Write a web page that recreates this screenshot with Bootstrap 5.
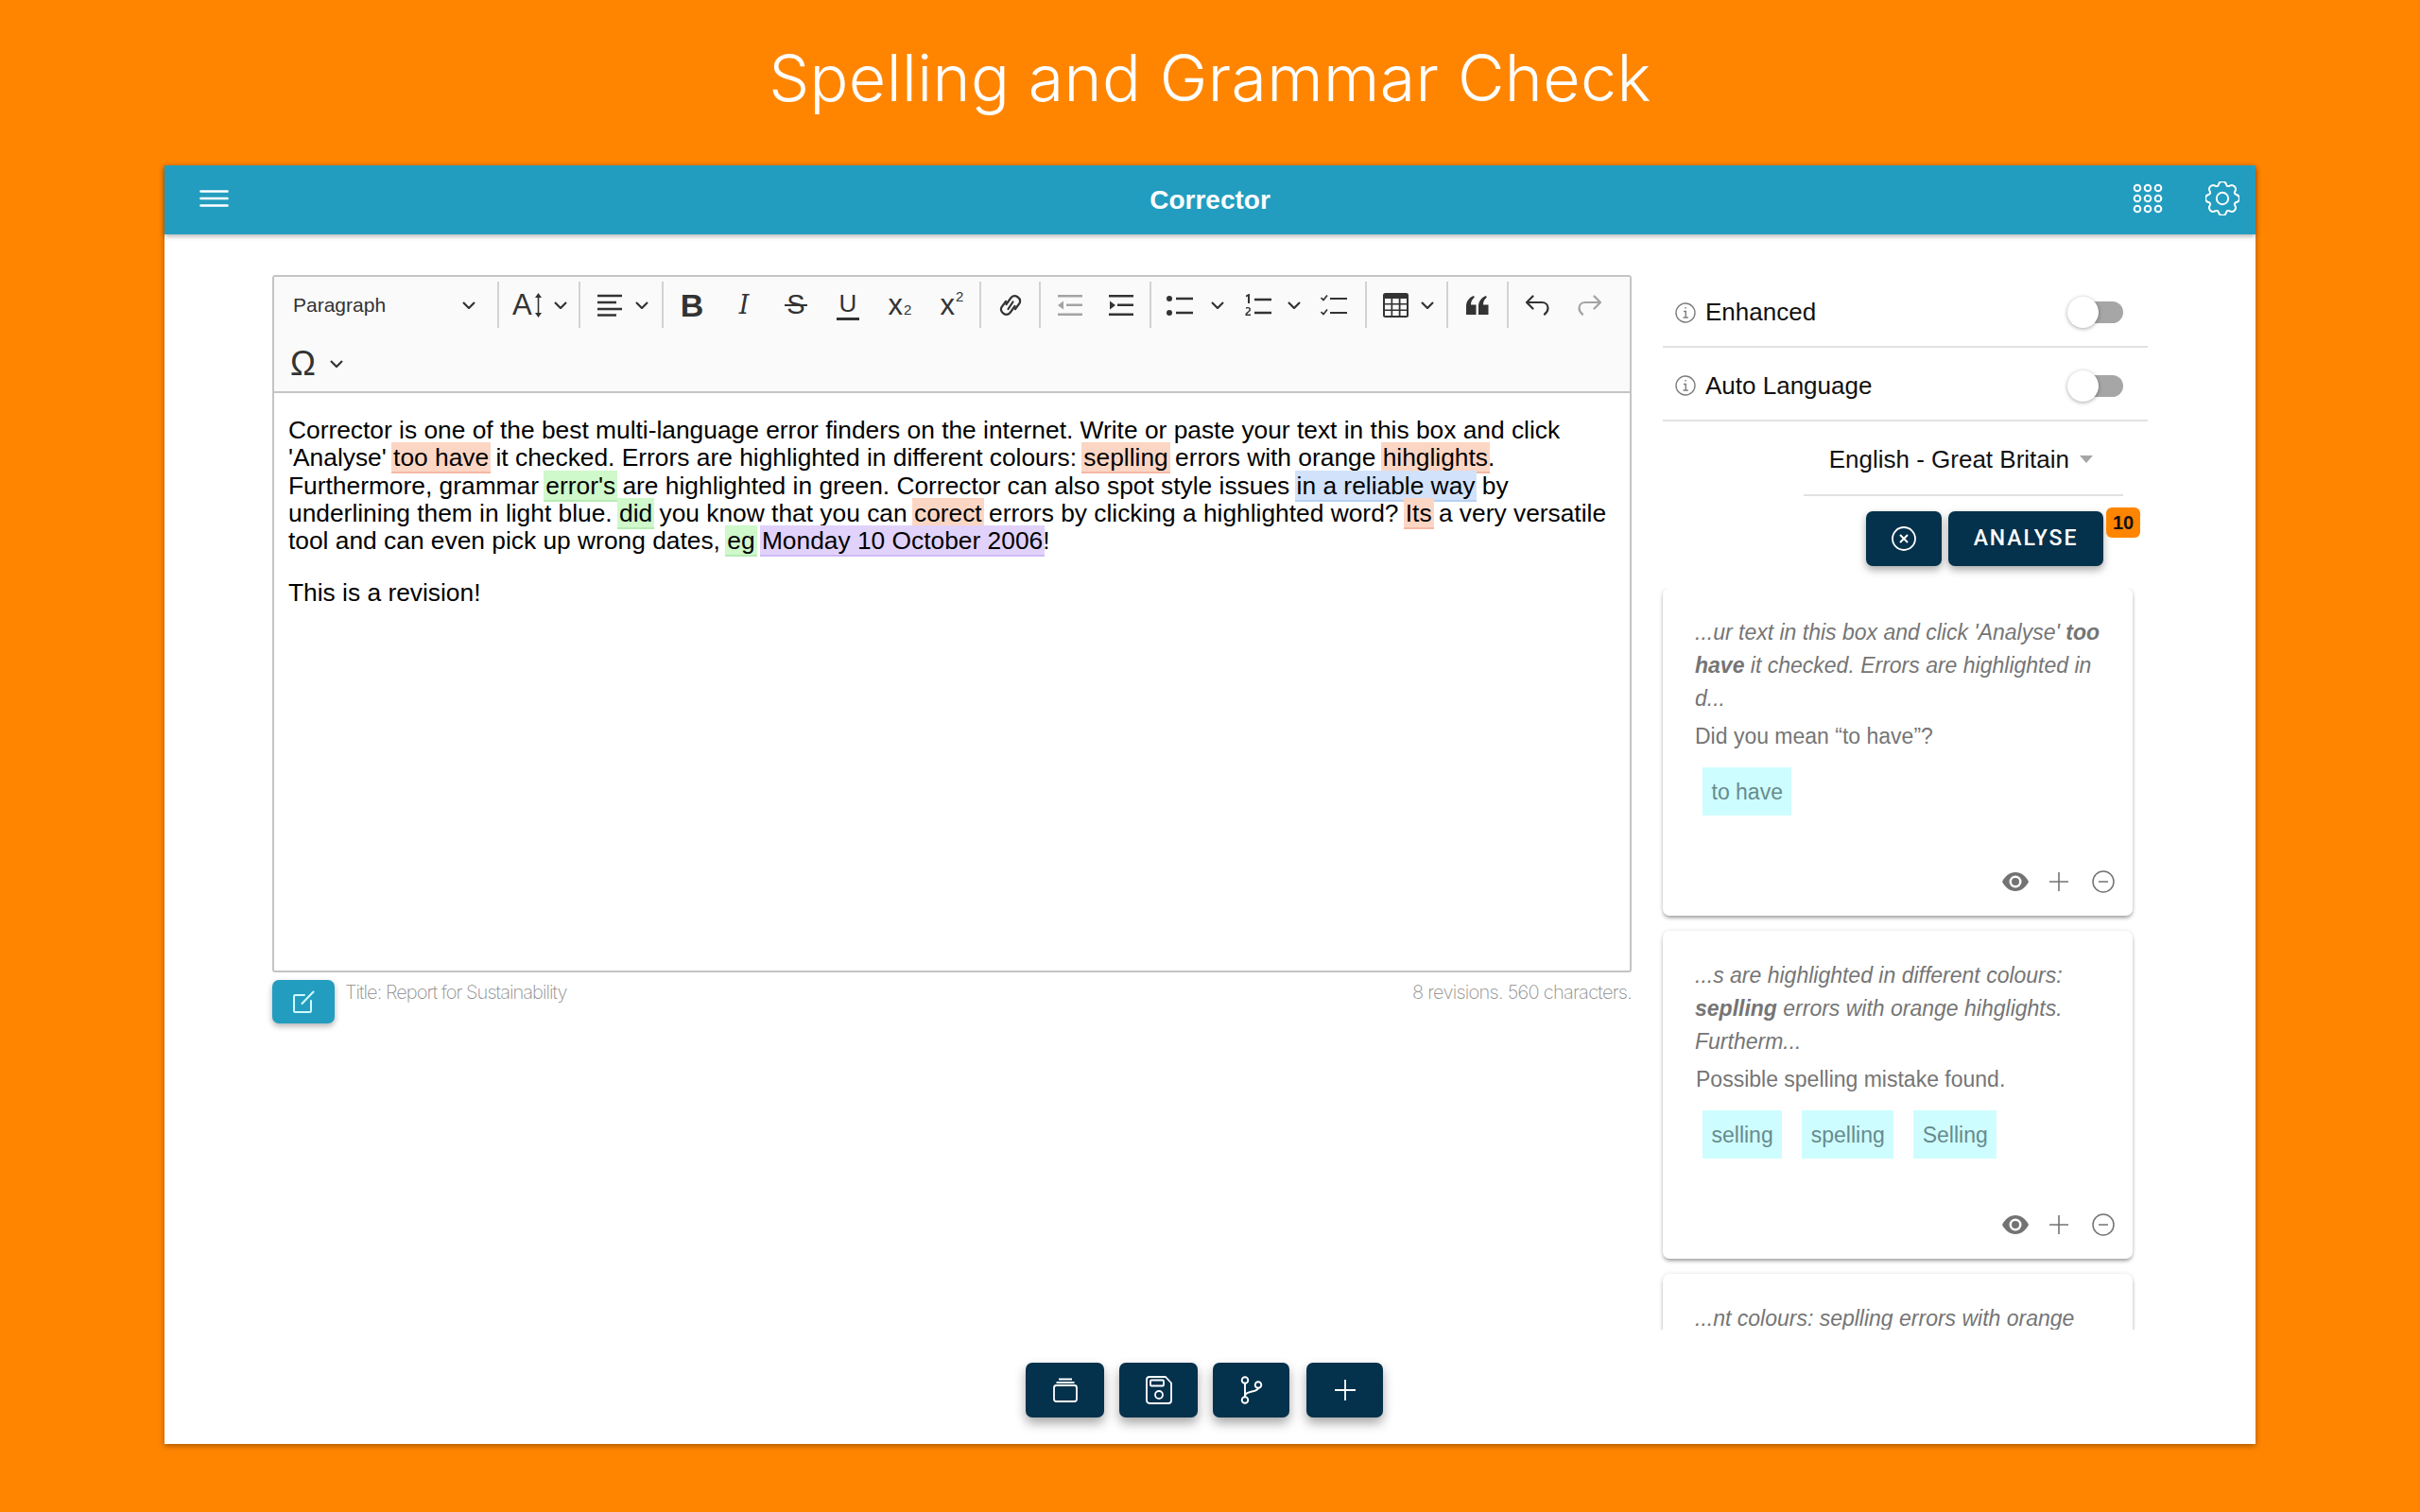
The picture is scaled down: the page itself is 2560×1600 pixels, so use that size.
<!DOCTYPE html>
<html lang="en">
<head>
<meta charset="utf-8">
<title>Corrector</title>
<link href="https://cdn.jsdelivr.net/npm/bootstrap@5.3.0/dist/css/bootstrap.min.css" rel="stylesheet">
<style>
html,body{height:1600px;overflow:hidden}
body{background:#ff8500;font-family:"Liberation Sans",Arial,sans-serif;color:#000}
.page-head{height:175px;margin:0;color:#fff;font-family:Inter,sans-serif;font-weight:300;font-size:68px;letter-spacing:.4px;display:flex;align-items:center;justify-content:center;padding-bottom:10px}
.app-win{margin:0 174px;height:1353px;background:#fff;box-shadow:0 2px 6px rgba(0,0,0,.35)}
.app-bar{height:73px;background:#239dbf;color:#fff;box-shadow:0 2px 5px rgba(0,0,0,.3);padding:0 17px 0 37px;position:relative}
.bar-ic{margin-top:-3px}
.bar-right{gap:45px}
.app-bar-title{font-size:28px;font-weight:700;line-height:1;flex:1;text-align:center;padding-left:62px}
.app-main{height:1194px;padding-top:43px}
.ed-col{margin-left:114px;width:1438px}
.ed-frame{border:2px solid #c4c4c4;border-radius:3px;height:738px}
.ed-tools{background:#fafafa;border-bottom:2px solid #c4c4c4;height:123px;padding-top:5px}
.tool-row{display:flex;height:49px;align-items:center;color:#333}
.tool-row+.tool-row{margin-top:13px}
.tg{height:49px;display:flex;align-items:center;border-right:2px solid #d2d2d2;flex:none}
.tg:last-child{border-right:0}
.tg-para{width:238px;padding:0 23px 0 20px;justify-content:space-between;font-size:21px;color:#333}
.tg-size{padding:0 12px 0 14px}
.tg-align{padding:0 14px 0 18px;gap:14px}
.tg-fmt{padding:0 16px 0 17px;gap:29px}
.tg-link{padding:0 18px 0 19px}
.tg-ind{padding:0 17px 0 18px;gap:28px}
.tg-list{padding:0 19px 0 16px}
.tg-table{padding:0 13px 0 17px;gap:13px}
.tg-quote{padding:0 19px}
.tg-hist{padding:0 17px;gap:28px}
.tg-omega{padding:0 0 0 17px;gap:12px;border:0}
.ic{display:block;flex:none}
.chev{width:14px;height:8px}
.m3{margin-left:3px}.m12{margin-left:12px}.m17{margin-left:17px}.m19{margin-left:19px}.m21{margin-left:21px}.m22{margin-left:22px}
.gl{width:26px;height:32px;display:flex;align-items:center;justify-content:center;font-family:"Liberation Sans",sans-serif;font-size:30px;line-height:1;color:#333;position:relative}
.gl-b{font-weight:700;font-size:34px}
.gl-i{font-family:"DejaVu Serif",serif;font-style:italic;font-size:27px;font-weight:400}
.gl-s{font-size:29px}
.gl-s::after{content:"";position:absolute;left:1px;right:1px;top:15px;height:2px;background:#333}
.gl-u{font-size:26px;padding-bottom:4px}
.gl-u::after{content:"";position:absolute;left:1px;right:1px;bottom:0;height:3px;background:#333}
.gl-x{font-size:31px;white-space:nowrap}
.gl-x sub,.gl-x sup{font-size:15px;line-height:0;vertical-align:baseline;position:relative;bottom:auto;margin-left:1px}
.gl-x sub{top:5px}
.gl-x sup{top:-9px}
.gl-a{font-size:31px;line-height:1;color:#333;width:23px}
.gl-om{font-size:36px;line-height:1;font-family:"Liberation Sans",sans-serif;color:#333;width:30px}
.ed-text{padding:25px 8px 0 15px;font-size:26.35px;line-height:29.25px;color:#000}
.ed-text p{margin:0 0 25.3px}
.hl-o,.hl-g,.hl-b,.hl-p{padding:1px 2px 0;margin:0 -2px;border-bottom:2px solid}
.hl-o{background:#fcd6c4;border-color:#f6b8a4}
.hl-g{background:#cff8cb;border-color:#b7ecb3}
.hl-b{background:#d2e2fa;border-color:#b8cff2}
.hl-p{background:#e1d2fb;border-color:#cfbaf6}
.ed-foot{height:54px;padding-top:8px}
.edit-btn{width:66px;height:46px;border:0;border-radius:7px;background:#239dbf;box-shadow:0 3px 6px rgba(0,0,0,.3);padding:0;flex:none}
.thin-note{font-family:Inter,sans-serif;font-weight:200;font-size:20px;color:#8c8c8c;line-height:1;letter-spacing:-.95px;padding-top:3px}
.thin-left{margin-left:11px}
.thin-right{letter-spacing:-.72px}
.side-col{margin-left:33px;width:513px}
.opt-row{height:78px;padding:4px 26px 0 13px;border-bottom:2px solid #e2e2e2;font-size:26px;color:#111}
.opt-row:first-child{height:77px}
.opt-row-label{margin-left:10px}
.tog{width:59px;height:33px;position:relative;flex:none}
.tog::before{content:"";position:absolute;left:8px;right:0;top:5px;height:23px;border-radius:12px;background:#a6a6a6}
.tog::after{content:"";position:absolute;left:0;top:0;width:33px;height:33px;border-radius:50%;background:#fff;box-shadow:0 1px 4px rgba(0,0,0,.35)}
.lang-row{height:79px;margin:0 26px 0 149px;border-bottom:2px solid #e2e2e2;font-size:26px;color:#111;padding:3px 32px 0 0;gap:11px;white-space:nowrap}
.lang-caret{width:0;height:0;border-left:7px solid transparent;border-right:7px solid transparent;border-top:8px solid #a6a6a6}
.act-row{margin-top:16px;padding-right:47px;gap:7px}
.dk-btn{height:58px;border:0;border-radius:7px;background:#04314b;color:#fff;box-shadow:0 4px 8px rgba(0,0,0,.35);padding:0;display:flex;align-items:center;justify-content:center}
.dk-btn:hover,.dk-btn:active{background:#04314b!important;color:#fff!important}
.btn-x{width:80px}
.btn-go{width:164px;font-family:Roboto,sans-serif;font-weight:500;font-size:23px;letter-spacing:1.9px;position:relative}
.cnt-tag{position:absolute;left:167px;top:-4px;width:36px;height:32px;border-radius:6px;background:#ff8500;color:#111;font-family:"Liberation Sans",sans-serif;font-weight:700;font-size:20px;letter-spacing:0;display:flex;align-items:center;justify-content:center}
.sug-scroll{height:785px;overflow:hidden;margin:23px -10px 0;padding:0 26px 0 10px}
.sug-card{width:497px;height:347px;border:0;border-radius:7px;box-shadow:0 3px 4px -1px rgba(0,0,0,.38),0 0 5px rgba(0,0,0,.1);margin-bottom:16px;color:#757575}
.sug-body{padding:30px 26px 0 34px;font-size:23px;line-height:35px;position:relative;height:100%}
.sug-ctx{font-style:italic;height:105px}
.sug-msg{margin-top:5px;height:35px}
.sug-msg-2{padding-left:1px}
.chips{margin:15px 0 0 8px;gap:21px}
.chip-s{background:#cefdff;color:#678b8d;height:51px;line-height:52px;padding:0 9.5px;flex:none}
.sug-tools{position:absolute;left:359px;top:299px;gap:22px}
.dock{gap:16px;padding-right:12px}
.dk-w1{width:83px}
.dk-w2{width:81px}
.dk-w2:last-child{margin-left:2px}
.dock .dk-btn{box-shadow:0 6px 12px rgba(0,0,0,.35)}
</style>
</head>
<body>
<h1 class="page-head">Spelling and Grammar Check</h1>
<div class="app-win d-flex flex-column">
  <nav class="app-bar navbar flex-nowrap">
    <svg class="ic bar-ic" width="31" height="20" viewBox="0 0 31 20" fill="none" stroke="#fff" stroke-width="2.6" stroke-linecap="round"><path d="M1.5 2.5h28M1.5 10h28M1.5 17.5h28"/></svg>
    <div class="app-bar-title">Corrector</div>
    <div class="d-flex align-items-center bar-right bar-ic">
      <svg class="ic" width="32" height="32" viewBox="0 0 32 32" fill="none" stroke="#fff" stroke-width="2"><circle cx="5" cy="5" r="3.3"/><circle cx="16" cy="5" r="3.3"/><circle cx="27" cy="5" r="3.3"/><circle cx="5" cy="16" r="3.3"/><circle cx="16" cy="16" r="3.3"/><circle cx="27" cy="16" r="3.3"/><circle cx="5" cy="27" r="3.3"/><circle cx="16" cy="27" r="3.3"/><circle cx="27" cy="27" r="3.3"/></svg>
      <svg class="ic" width="36" height="36" viewBox="0 0 16 16" fill="none" stroke="#fff" stroke-width=".85"><circle cx="8" cy="8" r="2.75"/><path d="M9.796 1.343c-.527-1.79-3.065-1.79-3.592 0l-.094.319a.873.873 0 0 1-1.255.52l-.292-.16c-1.64-.892-3.433.902-2.54 2.541l.159.292a.873.873 0 0 1-.52 1.255l-.319.094c-1.79.527-1.79 3.065 0 3.592l.319.094a.873.873 0 0 1 .52 1.255l-.16.292c-.892 1.64.901 3.434 2.541 2.54l.292-.159a.873.873 0 0 1 1.255.52l.094.319c.527 1.79 3.065 1.79 3.592 0l.094-.319a.873.873 0 0 1 1.255-.52l.292.16c1.64.893 3.434-.902 2.54-2.541l-.159-.292a.873.873 0 0 1 .52-1.255l.319-.094c1.79-.527 1.79-3.065 0-3.592l-.319-.094a.873.873 0 0 1-.52-1.255l.16-.292c.893-1.64-.902-3.433-2.541-2.54l-.292.159a.873.873 0 0 1-1.255-.52z"/></svg>
    </div>
  </nav>
  <div class="app-main d-flex">
    <div class="ed-col">
      <div class="ed-frame">
        <div class="ed-tools">
          <div class="tool-row">
            <div class="tg tg-para"><span>Paragraph</span><svg class="ic chev" viewBox="0 0 14 8" fill="none" stroke="#333" stroke-width="2.2"><path d="M1 1l6 6 6-6"/></svg></div>
            <div class="tg tg-size">
              <span class="gl-a">A</span>
              <svg class="ic" width="9" height="28" viewBox="0 0 9 28" fill="#333" stroke="#333" stroke-width="1.6"><path d="M4.5 3v22" fill="none"/><path d="M1 6l3.500-5 3.500 5zM1 22l3.500 5 3.500-5z" stroke="none"/></svg>
              <svg class="ic chev m12" viewBox="0 0 14 8" fill="none" stroke="#333" stroke-width="2.2"><path d="M1 1l6 6 6-6"/></svg>
            </div>
            <div class="tg tg-align">
              <svg class="ic" width="26" height="24" viewBox="0 0 26 24" fill="none" stroke="#333" stroke-width="2.4"><path d="M0 2h26M0 9h20M0 16h26M0 22.500h20"/></svg>
              <svg class="ic chev" viewBox="0 0 14 8" fill="none" stroke="#333" stroke-width="2.2"><path d="M1 1l6 6 6-6"/></svg>
            </div>
            <div class="tg tg-fmt">
              <span class="gl gl-b">B</span><span class="gl gl-i">I</span><span class="gl gl-s">S</span><span class="gl gl-u">U</span><span class="gl gl-x">x<sub>2</sub></span><span class="gl gl-x">x<sup>2</sup></span>
            </div>
            <div class="tg tg-link">
              <svg class="ic" width="24" height="26" viewBox="0 0 24 26" fill="none" stroke="#333" stroke-width="2.200" stroke-linecap="round"><path d="M7.500 12L12.500 5A5.500 5.500 0 0 1 21.500 11L17 17"/><path d="M16.500 14L11.500 21A5.500 5.500 0 0 1 2.500 15L7 9"/><path d="M9.500 17L14.500 9.500"/></svg>
            </div>
            <div class="tg tg-ind">
              <svg class="ic" width="26" height="24" viewBox="0 0 26 24" fill="#a3a3a3" stroke="none"><path d="M0 1h26v2.400H0zM9 10.500h17v2.400H9zM0 20.500h26v2.400H0zM0 12l6-4.500v9z"/></svg>
              <svg class="ic" width="26" height="24" viewBox="0 0 26 24" fill="#333" stroke="none"><path d="M0 1h26v2.400H0zM9 10.500h17v2.400H9zM0 20.500h26v2.400H0zM7 12l-6-4.500v9z"/></svg>
            </div>
            <div class="tg tg-list">
              <svg class="ic" width="28" height="24" viewBox="0 0 28 24" fill="#333"><circle cx="3" cy="5" r="3"/><circle cx="3" cy="20" r="3"/><path d="M10 3.800h18v2.400H10zM10 18.800h18v2.400H10z"/></svg>
              <svg class="ic chev m19" viewBox="0 0 14 8" fill="none" stroke="#333" stroke-width="2.2"><path d="M1 1l6 6 6-6"/></svg>
              <svg class="ic m22" width="28" height="26" viewBox="0 0 28 26" fill="#333"><path d="M10 5.800h18v2.400H10zM10 19.800h18v2.400H10zM1 2.500l3-1.500h1v10H3V3.500L1 4.500zM.5 24v-1.500c0-2 4-3 4-5 0-1.500-2.500-1.500-3.500-.5v-1.500c2-1 5-.5 5 2 0 2.500-3.500 3.500-3.800 5H6V24z"/></svg>
              <svg class="ic chev m17" viewBox="0 0 14 8" fill="none" stroke="#333" stroke-width="2.2"><path d="M1 1l6 6 6-6"/></svg>
              <svg class="ic m21" width="28" height="24" viewBox="0 0 28 24" fill="none" stroke="#333" stroke-width="2.2"><path d="M0.500 4l2.500 2.500 4-5M0.500 19l2.500 2.500 4-5" stroke-width="1.700"/><path d="M10 5h18M10 20h18"/></svg>
            </div>
            <div class="tg tg-table">
              <svg class="ic" width="27" height="26" viewBox="0 0 27 26"><rect x="0" y="0" width="27" height="26" rx="2.500" fill="#333"/><rect x="2" y="6" width="6.500" height="5" fill="#fafafa"/><rect x="10.200" y="6" width="6.500" height="5" fill="#fafafa"/><rect x="18.500" y="6" width="6.500" height="5" fill="#fafafa"/><rect x="2" y="12.500" width="6.500" height="5" fill="#fafafa"/><rect x="10.200" y="12.500" width="6.500" height="5" fill="#fafafa"/><rect x="18.500" y="12.500" width="6.500" height="5" fill="#fafafa"/><rect x="2" y="19" width="6.500" height="5" fill="#fafafa"/><rect x="10.200" y="19" width="6.500" height="5" fill="#fafafa"/><rect x="18.500" y="19" width="6.500" height="5" fill="#fafafa"/></svg>
              <svg class="ic chev" viewBox="0 0 14 8" fill="none" stroke="#333" stroke-width="2.2"><path d="M1 1l6 6 6-6"/></svg>
            </div>
            <div class="tg tg-quote">
              <svg class="ic" width="24" height="20" viewBox="0 0 24 20" fill="#333"><path d="M0 11c0-5 3-9 8-11l.800 1.500C6 4 5 6.500 5 9.500h5.500V20H0zM13 11c0-5 3-9 8-11l.800 1.500C19 4 18 6.500 18 9.500h5.500V20H13z"/></svg>
            </div>
            <div class="tg tg-hist">
              <svg class="ic" width="27" height="22" viewBox="0 0 27 22" fill="none" stroke="#333" stroke-width="2.200" stroke-linecap="round" stroke-linejoin="round"><path d="M8.500 1.500L2 8l6.500 6.500M2 8h16c4 0 6.500 2.500 6.500 6s-1.500 5-3.500 6.500"/></svg>
              <svg class="ic" width="27" height="22" viewBox="0 0 27 22" fill="none" stroke="#a3a3a3" stroke-width="2.200" stroke-linecap="round" stroke-linejoin="round"><path d="M18.500 1.500L25 8l-6.500 6.500M25 8H9c-4 0-6.500 2.500-6.500 6s1.500 5 3.500 6.500"/></svg>
            </div>
          </div>
          <div class="tool-row">
            <div class="tg tg-omega"><span class="gl-om">&#937;</span><svg class="ic chev" viewBox="0 0 14 8" fill="none" stroke="#333" stroke-width="2.2"><path d="M1 1l6 6 6-6"/></svg></div>
          </div>
        </div>
        <div class="ed-text">
          <p>Corrector is one of the best multi-language error finders on the internet. Write or paste your text in this box and click 'Analyse' <span class="hl-o">too have</span> it checked. Errors are highlighted in different colours: <span class="hl-o">seplling</span> errors with orange <span class="hl-o">hihglights</span>. Furthermore, grammar <span class="hl-g">error's</span> are highlighted in green. Corrector can also spot style issues <span class="hl-b">in a reliable way</span> by underlining them in light blue. <span class="hl-g">did</span> you know that you can <span class="hl-o">corect</span> errors by clicking a highlighted word? <span class="hl-o">Its</span> a very versatile tool and can even pick up wrong dates, <span class="hl-g">eg</span> <span class="hl-p">Monday 10 October 2006</span>!</p>
          <p>This is a revision!</p>
        </div>
      </div>
      <div class="ed-foot d-flex">
        <button class="edit-btn d-flex align-items-center justify-content-center" type="button" aria-label="Edit title">
          <svg class="ic" width="26" height="26" viewBox="0 0 26 26" fill="none" stroke="#cffbff" stroke-width="2" stroke-linecap="round" stroke-linejoin="round"><path d="M14 6H4.500A1.500 1.500 0 0 0 3 7.500v15A1.500 1.500 0 0 0 4.500 24h15a1.500 1.500 0 0 0 1.500-1.500V12"/><path d="M11.500 15L23.500 2.500"/></svg>
        </button>
        <div class="thin-note thin-left">Title: Report for Sustainability</div>
        <div class="thin-note thin-right ms-auto">8 revisions. 560 characters.</div>
      </div>
    </div>
    <div class="side-col">
      <div class="opt-row d-flex align-items-center justify-content-between">
        <div class="d-flex align-items-center">
          <svg class="ic" width="22" height="22" viewBox="0 0 22 22" fill="none" stroke="#7d7d7d" stroke-width="1.400"><circle cx="11" cy="11" r="10"/><path d="M9 9.500h2.300V16M8.500 16h5.300M10.300 5.800h1.500"/></svg>
          <span class="opt-row-label">Enhanced</span>
        </div>
        <span class="tog"></span>
      </div>
      <div class="opt-row d-flex align-items-center justify-content-between">
        <div class="d-flex align-items-center">
          <svg class="ic" width="22" height="22" viewBox="0 0 22 22" fill="none" stroke="#7d7d7d" stroke-width="1.400"><circle cx="11" cy="11" r="10"/><path d="M9 9.500h2.300V16M8.500 16h5.300M10.300 5.800h1.500"/></svg>
          <span class="opt-row-label">Auto Language</span>
        </div>
        <span class="tog"></span>
      </div>
      <div class="lang-row d-flex align-items-center justify-content-end">
        <span>English - Great Britain</span><span class="lang-caret"></span>
      </div>
      <div class="act-row d-flex justify-content-end">
        <button class="btn dk-btn btn-x" type="button" aria-label="Clear">
          <svg class="ic" width="26" height="26" viewBox="0 0 26 26" fill="none" stroke="#fff" stroke-width="1.800"><circle cx="13" cy="13" r="12"/><path d="M9 9l8 8M17 9l-8 8" stroke-width="2"/></svg>
        </button>
        <button class="btn dk-btn btn-go" type="button">ANALYSE<span class="cnt-tag">10</span></button>
      </div>
      <div class="sug-scroll">
        <div class="card sug-card">
          <div class="sug-body">
            <div class="sug-ctx">...ur text in this box and click 'Analyse' <b>too have</b> it checked. Errors are highlighted in d...</div>
            <div class="sug-msg">Did you mean “to have”?</div>
            <div class="chips d-flex"><span class="chip-s">to have</span></div>
            <div class="sug-tools d-flex align-items-center">
              <svg class="ic" width="28" height="20" viewBox="0 0 28 20"><path d="M14 0C8 0 3 4 0 10c3 6 8 10 14 10s11-4 14-10C25 4 20 0 14 0z" fill="#737373"/><circle cx="14" cy="10" r="6.500" fill="#fff"/><circle cx="14" cy="10" r="4" fill="#737373"/></svg>
              <svg class="ic" width="20" height="20" viewBox="0 0 20 20" stroke="#737373" stroke-width="1.600"><path d="M10 0v20M0 10h20"/></svg>
              <svg class="ic m3" width="24" height="24" viewBox="0 0 24 24" fill="none" stroke="#737373" stroke-width="1.500"><circle cx="12" cy="12" r="11"/><path d="M7 12h10"/></svg>
            </div>
          </div>
        </div>
        <div class="card sug-card">
          <div class="sug-body">
            <div class="sug-ctx">...s are highlighted in different colours: <b>seplling</b> errors with orange hihglights. Furtherm...</div>
            <div class="sug-msg sug-msg-2">Possible spelling mistake found.</div>
            <div class="chips d-flex"><span class="chip-s">selling</span><span class="chip-s">spelling</span><span class="chip-s">Selling</span></div>
            <div class="sug-tools d-flex align-items-center">
              <svg class="ic" width="28" height="20" viewBox="0 0 28 20"><path d="M14 0C8 0 3 4 0 10c3 6 8 10 14 10s11-4 14-10C25 4 20 0 14 0z" fill="#737373"/><circle cx="14" cy="10" r="6.500" fill="#fff"/><circle cx="14" cy="10" r="4" fill="#737373"/></svg>
              <svg class="ic" width="20" height="20" viewBox="0 0 20 20" stroke="#737373" stroke-width="1.600"><path d="M10 0v20M0 10h20"/></svg>
              <svg class="ic m3" width="24" height="24" viewBox="0 0 24 24" fill="none" stroke="#737373" stroke-width="1.500"><circle cx="12" cy="12" r="11"/><path d="M7 12h10"/></svg>
            </div>
          </div>
        </div>
        <div class="card sug-card">
          <div class="sug-body">
            <div class="sug-ctx">...nt colours: seplling errors with orange</div>
          </div>
        </div>
      </div>
    </div>
  </div>
  <div class="dock d-flex justify-content-center">
    <button class="btn dk-btn dk-w1" type="button" aria-label="Open">
      <svg class="ic" width="28" height="26" viewBox="0 0 28 26" fill="none" stroke="#fff" stroke-width="1.800"><rect x="2" y="8" width="24" height="17" rx="2.500"/><path d="M4.500 5h19M7 1.500h14"/></svg>
    </button>
    <button class="btn dk-btn dk-w1" type="button" aria-label="Save">
      <svg class="ic" width="28" height="30" viewBox="0 0 28 30" fill="none" stroke="#fff" stroke-width="1.800" stroke-linejoin="round"><path d="M4 1h17l6 6.500V26a3 3 0 0 1-3 3H4a3 3 0 0 1-3-3V4a3 3 0 0 1 3-3z"/><rect x="5" y="4.500" width="14" height="6" rx="1"/><circle cx="14" cy="20" r="4"/></svg>
    </button>
    <button class="btn dk-btn dk-w2" type="button" aria-label="Branch">
      <svg class="ic" width="24" height="30" viewBox="0 0 24 30" fill="none" stroke="#fff" stroke-width="1.900"><circle cx="5" cy="4.500" r="3.300"/><circle cx="5" cy="25.500" r="3.300"/><circle cx="19" cy="9.500" r="3.300"/><path d="M5 8v14M5 21c1-6 13-3 14-8.200"/></svg>
    </button>
    <button class="btn dk-btn dk-w2" type="button" aria-label="Add">
      <svg class="ic" width="22" height="22" viewBox="0 0 22 22" stroke="#fff" stroke-width="1.800"><path d="M11 0v22M0 11h22"/></svg>
    </button>
  </div>
</div>
<script src="https://cdn.jsdelivr.net/npm/bootstrap@5.3.0/dist/js/bootstrap.bundle.min.js"></script>
</body>
</html>
